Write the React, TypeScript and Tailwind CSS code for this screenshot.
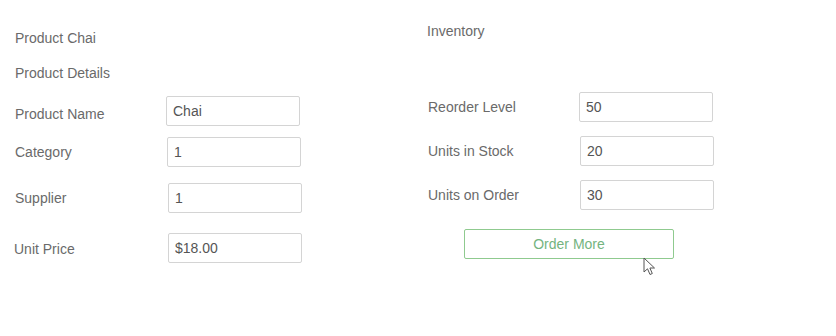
import React from "react";

const font = { fontFamily: '"Liberation Sans", Arial, sans-serif' };

function Field({
  label,
  value,
  gap,
  className = "",
  labelClass = "",
}: {
  label: string;
  value: string;
  gap: string;
  className?: string;
  labelClass?: string;
}) {
  return (
    <div className={`flex items-center ${className}`}>
      <span className={`shrink-0 text-[14px] leading-5 text-[#6a6a6a] ${gap} ${labelClass}`}>{label}</span>
      <input
        readOnly
        value={value}
        className="h-[30px] w-[134px] rounded-[2px] border border-[#d4d4d4] bg-white px-[6px] text-[14px] text-[#555] outline-none"
      />
    </div>
  );
}

function Cursor() {
  return (
    <svg
      width="13"
      height="20"
      viewBox="0 0 13 20"
      className="absolute left-[643px] top-[257px]"
    >
      <path
        d="M1 1 L1 15 L4.5 11.8 L7 17.5 L9.3 16.5 L6.9 11 L11.5 11 Z"
        fill="#fff"
        stroke="#555"
        strokeWidth="1"
        strokeLinejoin="round"
      />
    </svg>
  );
}

export default function App() {
  return (
    <div className="relative h-[336px] w-[836px] bg-white" style={font}>
      <div className="flex">
        <div className="w-[427px] shrink-0 pl-[15px]">
          <p className="pt-[28px] text-[14px] leading-5 text-[#6a6a6a]">Product Chai</p>
          <p className="mt-[15px] text-[14px] leading-5 text-[#6a6a6a]">Product Details</p>
          <Field label="Product Name" value="Chai" gap="w-[151px]" className="mt-[13px]" labelClass="mt-[6px]" />
          <Field label="Category" value="1" gap="w-[152px]" className="mt-[11px]" />
          <Field label="Supplier" value="1" gap="w-[153px]" className="mt-[16px]" />
          <Field label="Unit Price" value="$18.00" gap="w-[154px] -ml-px" className="mt-[20px]" labelClass="mt-[2px]" />
        </div>
        <div className="w-[300px]">
          <p className="pt-[21px] text-[14px] leading-5 text-[#6a6a6a]">Inventory</p>
          <div className="pl-px">
            <Field label="Reorder Level" value="50" gap="w-[151px]" className="mt-[51px]" />
            <Field label="Units in Stock" value="20" gap="w-[152px]" className="mt-[14px]" />
            <Field label="Units on Order" value="30" gap="w-[152px]" className="mt-[14px]" />
          </div>
          <button className="ml-[37px] mt-[19px] h-[30px] w-[210px] rounded-[2px] border border-[#8fca8f] bg-white text-[14px] text-[#74b47f]">
            Order More
          </button>
        </div>
      </div>
      <Cursor />
    </div>
  );
}
